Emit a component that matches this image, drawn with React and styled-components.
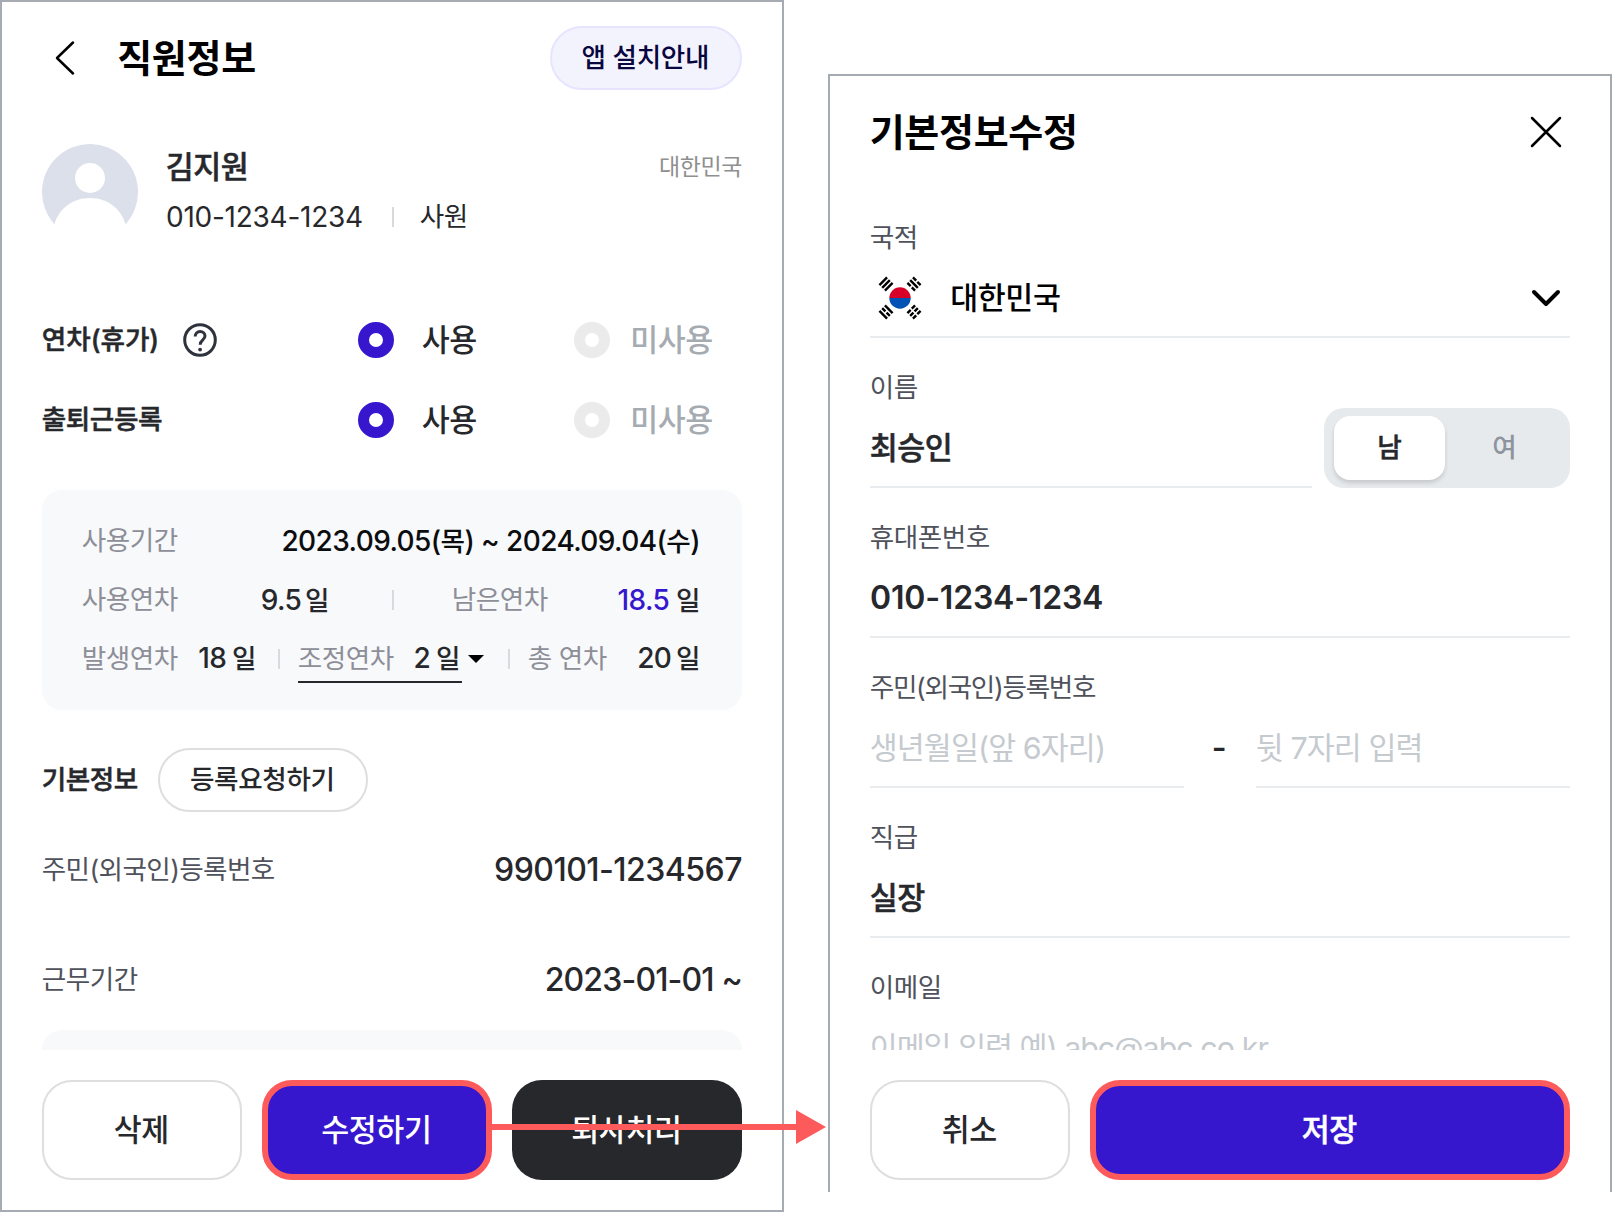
import styled, { createGlobalStyle } from 'styled-components'

const GlobalStyle = createGlobalStyle`
  * {
    box-sizing: border-box;
  }
  body {
    margin: 0;
    background: #fff;
    color: #27282c;
    font-family: Inter, "Noto Sans CJK KR", sans-serif;
  }
`

const Page = styled.main`
  position: relative;
  display: flex;
  align-items: flex-start;
  gap: 44px;
  width: 1612px;
  height: 1212px;
  overflow: hidden;
`

const Panel = styled.section`
  display: flex;
  flex-direction: column;
  width: 784px;
  height: ${(p) => p.$height}px;
  margin-top: ${(p) => p.$top || 0}px;
  padding: 0 40px;
  border: 2px solid #a6abb2;
  border-bottom-width: ${(p) => (p.$open ? 0 : 2)}px;
  background: #fff;
`

const Scroll = styled.div`
  display: flex;
  flex-direction: column;
  height: ${(p) => p.$height}px;
  overflow: hidden;

  & > * {
    flex: none;
  }
`

const SIZES = {
  s: { size: 23, spacing: -0.4, line: 40 },
  m: { size: 26.6, spacing: -0.45, line: 39 },
  l: { size: 30.4, spacing: -0.4, line: 40 },
  xl: { size: 38, spacing: -0.3, line: 40 },
}

const Text = styled.span`
  margin-left: ${(p) => (p.$inline ? 0 : -0.3)}px;
  padding-bottom: ${(p) => ((p.$size || 'm') === 'm' ? 1 : 0)}px;
  font-size: ${(p) => SIZES[p.$size || 'm'].size}px;
  letter-spacing: ${(p) => p.$spacing ?? SIZES[p.$size || 'm'].spacing}px;
  font-weight: ${(p) => p.$weight || 400};
  color: ${(p) => p.$color || '#27282c'};
  line-height: ${(p) => SIZES[p.$size || 'm'].line}px;
  white-space: pre;
`

// Between medium and bold
const SemiText = styled(Text)`
  font-weight: 500;
  -webkit-text-stroke: 0.5px currentColor;
`

const Num = styled.span`
  font-size: ${(p) => p.$size || 28}px;
  letter-spacing: ${(p) => p.$spacing ?? -0.6}px;
  font-weight: ${(p) => p.$weight || 500};
  color: ${(p) => p.$color || 'inherit'};
  line-height: 40px;
  white-space: pre;
`

const Header = styled.header`
  display: flex;
  align-items: center;
  height: 112px;
`

const BackIcon = styled.svg`
  width: 40px;
  height: 40px;
  margin: 0 34px 0 1.5px;
`

const Pill = styled.button`
  display: flex;
  align-items: center;
  justify-content: center;
  width: ${(p) => p.$width}px;
  height: 64px;
  margin-left: ${(p) => (p.$tint ? 'auto' : '0')};
  padding: 0 1px 0 0;
  border: 2px solid ${(p) => (p.$tint ? '#e7e4ff' : '#dedede')};
  border-radius: 32px;
  background: ${(p) => (p.$tint ? '#f3f3fd' : '#fff')};
  font-family: inherit;
`

const Profile = styled.div`
  display: flex;
  height: 96px;
  margin-top: 30px;
`

const Avatar = styled.svg`
  width: 96px;
  height: 96px;
  margin-right: 28px;
`

const ProfileBody = styled.div`
  flex: 1;
  display: flex;
  flex-direction: column;
  gap: 10px;
  padding-top: 3px;
`

const Line = styled.div`
  display: flex;
  align-items: center;
  justify-content: ${(p) => (p.$between ? 'space-between' : 'flex-start')};
  height: 40px;
`

const Bar = styled.i`
  flex: none;
  width: 2px;
  height: 20px;
  margin: ${(p) => p.$margin || '0'};
  background: #d9dadd;
`

const Options = styled.div`
  display: flex;
  flex-direction: column;
  margin-top: 60px;
`

const OptionRow = styled.div`
  display: grid;
  grid-template-columns: 316px 216px 1fr;
  align-items: center;
  height: 80px;
`

const OptionLabel = styled.div`
  display: flex;
  align-items: center;
  gap: 24px;
`

const HelpIcon = styled.svg`
  width: 34px;
  height: 34px;
`

const Option = styled.label`
  display: flex;
  align-items: center;
  gap: ${(p) => (p.$on ? 28 : 20.5)}px;
`

const Radio = styled.i`
  width: 36px;
  height: 36px;
  border: 11px solid ${(p) => (p.$on ? '#3617ce' : '#ebebeb')};
  border-radius: 50%;
  background: #fff;
`

const Card = styled.div`
  display: flex;
  flex-direction: column;
  justify-content: space-between;
  height: 220px;
  margin-top: 30px;
  padding: 31px 42px 32px 40px;
  border-radius: 20px;
  background: #f8f9fb;
`

const CardGrid = styled.div`
  display: grid;
  grid-template-columns: ${(p) => p.$columns};
  align-items: center;
  height: 40px;
`

const Days = styled.div`
  display: flex;
  align-items: baseline;
  justify-content: flex-end;
  gap: ${(p) => p.$gap}px;
`

const Adjust = styled.div`
  display: flex;
  align-items: center;
  justify-content: space-between;
  width: 164px;
  height: 44px;
  margin-top: 4px;
  padding-right: 2px;
  padding-bottom: 2px;
  border-bottom: 2px solid #27282c;
`

const Caret = styled.svg`
  width: 16px;
  height: 8px;
  margin-left: 6px;
`

const Section = styled.div`
  display: flex;
  align-items: center;
  gap: 20px;
  height: 64px;
  margin-top: 38px;
`

const SectionTitle = styled.div`
  display: flex;
  width: 96px;
`

const InfoRow = styled.div`
  display: flex;
  align-items: center;
  justify-content: space-between;
  height: 40px;
  margin-top: ${(p) => p.$top}px;
`

const Footer = styled.footer`
  display: flex;
  gap: 20px;
  padding-top: 30px;
`

const looks = {
  plain: 'background: #fff; border: 2px solid #dedede;',
  primary: 'background: #3617ce; border: 6px solid #fd5b5b;',
  dark: 'background: #27282c; border: 0;',
}

const Button = styled.button`
  width: ${(p) => p.$width}px;
  height: 100px;
  padding: 0 1px 0 0;
  border-radius: 30px;
  font-family: inherit;
  ${(p) => looks[p.$look]}
`

const CloseIcon = styled.svg`
  width: 32px;
  height: 32px;
  margin-left: auto;
  margin-right: 8px;
`

const Field = styled.div`
  height: 150px;
  padding-top: 30px;
`

const FieldLabel = styled.div`
  display: flex;
  height: 40px;
`

const Controls = styled.div`
  display: flex;
  align-items: center;
  height: 80px;
`

const Control = styled.div`
  flex: 1;
  display: flex;
  align-items: center;
  height: 80px;
  padding-top: 2px;
  border-bottom: 2px solid #e9ecef;
`

const Flag = styled.svg`
  width: 44px;
  height: 44px;
  margin: 0 28.5px 0 8px;
`

const Chevron = styled.svg`
  width: 30px;
  height: 18px;
  margin-left: auto;
  margin-right: 9px;
`

const Toggle = styled.div`
  display: flex;
  width: 246px;
  height: 80px;
  margin-left: 12px;
  padding: 8px 10px;
  border-radius: 20px;
  background: #e7eaed;
`

const ToggleItem = styled.div`
  flex: ${(p) => (p.$on ? '0 0 111px' : '1')};
  display: flex;
  align-items: center;
  justify-content: center;
  padding-left: ${(p) => (p.$on ? 0 : 4)}px;
  border-radius: 16px;
  ${(p) => p.$on && 'background: #fff; box-shadow: 0 3px 4px rgba(0, 0, 0, 0.14);'}
`

const Dash = styled.div`
  width: 72px;
  padding-right: 2px;
  text-align: center;
`

// Connects the edit button to the form it opens
const Arrow = styled.svg`
  position: absolute;
  left: 490px;
  top: 1109px;
  width: 338px;
  height: 36px;
`

const Trigram = ({ x, y, angle, bars }) => (
  <g transform={`translate(${x} ${y}) rotate(${angle})`} stroke="#000" strokeWidth="2.4">
    {bars.map((broken, i) => (
      <path key={i} d={broken ? `M-5.4 ${i * 3.9 - 3.9}h4.6m1.6 0h4.6` : `M-5.4 ${i * 3.9 - 3.9}h10.8`} />
    ))}
  </g>
)

const KoreaFlag = () => (
  <Flag viewBox="0 0 44 44">
    <path d="M11.3 22a10.7 10.7 0 0 1 21.4 0z" fill="#d80027" />
    <path d="M11.3 22a10.7 10.7 0 0 0 21.4 0z" fill="#0052b4" />
    <Trigram x={8} y={8} angle={-45} bars={[0, 0, 0]} />
    <Trigram x={36} y={8} angle={45} bars={[1, 0, 1]} />
    <Trigram x={8} y={36} angle={45} bars={[0, 1, 0]} />
    <Trigram x={36} y={36} angle={-45} bars={[1, 1, 1]} />
  </Flag>
)

const OptionLine = ({ label, help }) => (
  <OptionRow>
    <OptionLabel>
      <SemiText $spacing={help ? 0 : -0.4}>{label}</SemiText>
      {help && (
        <HelpIcon viewBox="0 0 34 34" fill="none" stroke="#2f333d" strokeWidth="3">
          <circle cx="17" cy="17" r="15.3" />
          <path d="M12.2 13.6c0-3 2-5 4.9-5s4.9 1.9 4.9 4.5c0 3.9-4.8 3.8-4.8 8.7" />
          <circle cx="17.1" cy="26.6" r="1.9" fill="#2f333d" stroke="none" />
        </HelpIcon>
      )}
    </OptionLabel>
    <Option $on>
      <Radio $on />
      <Text $size="l" $weight={500}>사용</Text>
    </Option>
    <Option>
      <Radio />
      <Text $size="l" $weight={500} $color="#a6abb2">미사용</Text>
    </Option>
  </OptionRow>
)

const DayCount = ({ value, color, gap = 6 }) => (
  <Days $gap={gap}>
    <Num $color={color}>{value}</Num>
    <Text $weight={500}>일</Text>
  </Days>
)

const EmployeeInfo = () => (
  <Panel $height={1212}>
    <Scroll $height={1048}>
      <Header>
        <BackIcon viewBox="0 0 40 40" fill="none" stroke="#000" strokeWidth="2.5" strokeLinecap="round" strokeLinejoin="round">
          <path d="M29 4.5 13 20l16 15.5" />
        </BackIcon>
        <Text $size="xl" $weight={700} $color="#000">직원정보</Text>
        <Pill $tint $width={192}><Text $weight={500} $color="#08053f" $spacing={-0.3}>앱 설치안내</Text></Pill>
      </Header>

      <Profile>
        <Avatar viewBox="0 0 96 96">
          <path
            fill="#dce0eb"
            fillRule="evenodd"
            d="M12.5 80.3A48 48 0 1 1 83.5 80.3C79.5 65 65.5 54 48 54S16.5 65 12.5 80.3zM48 19a15 15 0 1 0 0 30 15 15 0 0 0 0-30z"
          />
        </Avatar>
        <ProfileBody>
          <Line $between>
            <SemiText $size="l">김지원</SemiText>
            <Text $size="s" $color="#8f8f8f">대한민국</Text>
          </Line>
          <Line>
            <Num $weight={400} $spacing={-0.25}>010-1234-1234</Num>
            <Bar $margin="0 26px 0 29px" />
            <Text>사원</Text>
          </Line>
        </ProfileBody>
      </Profile>

      <Options>
        <OptionLine label="연차(휴가)" help />
        <OptionLine label="출퇴근등록" />
      </Options>

      <Card>
        <Line $between>
          <Text $color="#8d8e97">사용기간</Text>
          <Num $color="#0c0d0f">
            2023.09.05(<Text $inline $weight={500} $color="#0c0d0f">목</Text>) ~ 2024.09.04(<Text $inline $weight={500} $color="#0c0d0f">수</Text>)
          </Num>
        </Line>
        <CardGrid $columns="120px 127px 123px 120px 1fr">
          <Text $color="#8d8e97">사용연차</Text>
          <DayCount value="9.5" gap={4} />
          <Bar $margin="0 0 0 63px" />
          <Text $color="#8d8e97">남은연차</Text>
          <DayCount value="18.5" color="#3617ce" gap={7} />
        </CardGrid>
        <CardGrid $columns="100px 74px 42px 164px 66px 1fr">
          <Text $color="#8d8e97">발생연차</Text>
          <DayCount value="18" />
          <Bar $margin="0 0 0 22px" />
          <Line>
            <Adjust>
              <Text $color="#8d8e97">조정연차</Text>
              <DayCount value="2" />
            </Adjust>
          </Line>
          <Line>
            <Caret viewBox="0 0 16 8"><path d="M0 0h16L8 8z" /></Caret>
            <Bar $margin="0 0 0 24px" />
          </Line>
          <Line $between>
            <Text $color="#8d8e97">총 연차</Text>
            <DayCount value="20" gap={5} />
          </Line>
        </CardGrid>
      </Card>

      <Section>
        <SectionTitle><SemiText>기본정보</SemiText></SectionTitle>
        <Pill $width={210}><Text $weight={500} $spacing={-0.35}>등록요청하기</Text></Pill>
      </Section>

      <InfoRow $top={38}>
        <Text $color="#50525b" $spacing={-0.6}>주민(외국인)등록번호</Text>
        <Num $size={32} $spacing={-0.52}>990101-1234567</Num>
      </InfoRow>
      <InfoRow $top={70}>
        <Text $color="#50525b">근무기간</Text>
        <Num $size={32} $spacing={-0.85}>2023-01-01 ~</Num>
      </InfoRow>
      <Card />
    </Scroll>
    <Footer>
      <Button $width={200} $look="plain"><Text $size="l" $weight={500}>삭제</Text></Button>
      <Button $width={230} $look="primary"><Text $size="l" $weight={500} $color="#fff">수정하기</Text></Button>
      <Button $width={230} $look="dark"><Text $size="l" $weight={500} $color="#fff">퇴사처리</Text></Button>
    </Footer>
  </Panel>
)

const FormField = ({ label, spacing, children }) => (
  <Field>
    <FieldLabel><Text $color="#50525b" $spacing={spacing}>{label}</Text></FieldLabel>
    <Controls>{children}</Controls>
  </Field>
)

const Placeholder = ({ spacing = -0.9, children }) => (
  <Text $size="l" $color="#c5cacf" $spacing={spacing}>{children}</Text>
)

const EditForm = () => (
  <Panel $height={1118} $top={74} $open>
    <Scroll $height={974}>
      <Header>
        <Text $size="xl" $weight={700} $color="#000">기본정보수정</Text>
        <CloseIcon viewBox="0 0 32 32" stroke="#000" strokeWidth="2.5" strokeLinecap="round">
          <path d="M2 2l28 28M30 2 2 30" />
        </CloseIcon>
      </Header>
      <FormField label="국적">
        <Control>
          <KoreaFlag />
          <Text $size="l" $weight={500} $color="#000">대한민국</Text>
          <Chevron viewBox="0 0 30 18" fill="none" stroke="#000" strokeWidth="4" strokeLinecap="round" strokeLinejoin="round">
            <path d="M3 3l12 12L27 3" />
          </Chevron>
        </Control>
      </FormField>
      <FormField label="이름">
        <Control><SemiText $size="l">최승인</SemiText></Control>
        <Toggle>
          <ToggleItem $on><SemiText>남</SemiText></ToggleItem>
          <ToggleItem><Text $weight={500} $color="#8d949d">여</Text></ToggleItem>
        </Toggle>
      </FormField>
      <FormField label="휴대폰번호">
        <Control><Num $size={32} $weight={600} $spacing={-0.2}>010-1234-1234</Num></Control>
      </FormField>
      <FormField label="주민(외국인)등록번호" spacing={-1.28}>
        <Control><Placeholder>생년월일(앞 6자리)</Placeholder></Control>
        <Dash><Num $size={32} $weight={600}>-</Num></Dash>
        <Control><Placeholder>뒷 7자리 입력</Placeholder></Control>
      </FormField>
      <FormField label="직급">
        <Control><SemiText $size="l">실장</SemiText></Control>
      </FormField>
      <FormField label="이메일">
        <Control><Placeholder spacing={-1}>이메일 입력 예) abc@abc.co.kr</Placeholder></Control>
      </FormField>
    </Scroll>
    <Footer>
      <Button $width={200} $look="plain"><Text $size="l" $weight={500}>취소</Text></Button>
      <Button $width={480} $look="primary"><SemiText $size="l" $color="#fff">저장</SemiText></Button>
    </Footer>
  </Panel>
)

const App = () => (
  <>
    <GlobalStyle />
    <Page>
      <EmployeeInfo />
      <EditForm />
      <Arrow viewBox="0 0 338 36" fill="#fd5b5b">
        <path d="M0 15h306V1l30 17-30 17V21H0z" />
      </Arrow>
    </Page>
  </>
)

export default App
